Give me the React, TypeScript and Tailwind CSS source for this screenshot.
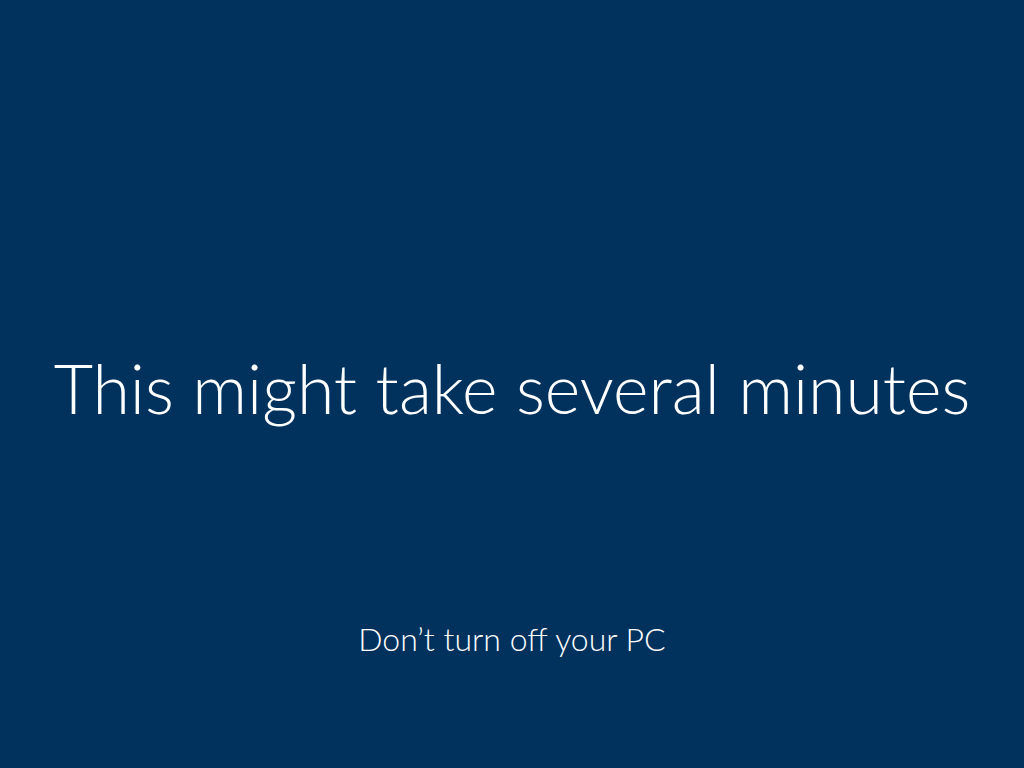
export default function App() {
  return (
    <div
      className="w-full h-[768px] bg-[#01325d] text-white flex flex-col items-center overflow-hidden"
      style={{ fontFamily: 'Lato, "Open Sans", sans-serif' }}
    >
      <div className="pt-[338px] text-[68px] font-light leading-[100px] whitespace-nowrap">
        This might take several minutes
      </div>
      <div className="mt-[181px] text-[32px] font-light leading-[40px] whitespace-nowrap">
        Don’t turn off your PC
      </div>
    </div>
  );
}
